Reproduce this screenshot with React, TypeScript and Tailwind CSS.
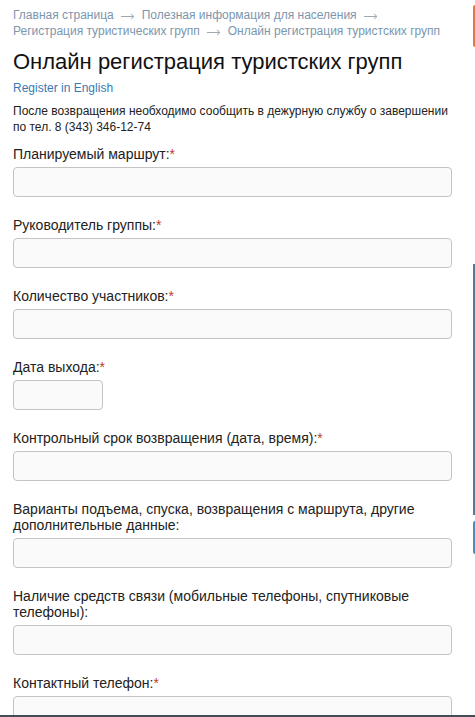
// Онлайн регистрация туристских групп — мобильная форма

const fields: { label: string; required?: boolean; narrow?: boolean }[] = [
  { label: 'Планируемый маршрут:', required: true },
  { label: 'Руководитель группы:', required: true },
  { label: 'Количество участников:', required: true },
  { label: 'Дата выхода:', required: true, narrow: true },
  { label: 'Контрольный срок возвращения (дата, время):', required: true },
  { label: 'Варианты подъема, спуска, возвращения с маршрута, другие дополнительные данные:' },
  { label: 'Наличие средств связи (мобильные телефоны, спутниковые телефоны):' },
  { label: 'Контактный телефон:', required: true },
];

// Длинная тонкая стрелка между пунктами крошек
function Arrow() {
  return (
    <svg
      className="mx-[7px] inline-block align-middle"
      width="14"
      height="8"
      viewBox="0 0 14 8"
      aria-hidden
    >
      <path d="M0 4.5H13M10 2L13 4.5L10 7" fill="none" stroke="#a0a8b0" strokeWidth="1" />
    </svg>
  );
}

export default function App() {
  return (
    <div className="relative h-[717px] overflow-hidden bg-white font-['Liberation_Sans',Arial,sans-serif] text-[#222]">
      {/* ── Боковые вкладки ── */}
      <div className="absolute right-0 top-[5px] h-[42px] w-[2px] rounded-l-sm bg-[#e07a45]" />
      <div className="absolute right-0 top-[264px] h-[251px] w-[2px] bg-[#5a7890]" />
      <div className="absolute right-0 top-[521px] h-[33px] w-[2px] rounded-l-sm bg-[#4a8ec0]" />
      <div className="absolute bottom-0 left-0 h-[2px] w-full bg-[#444c55]" />

      <div className="px-[13px] pt-[7px]">
        {/* ── Хлебные крошки ── */}
        <nav className="pr-[10px] text-[12px] leading-[16px] text-[#7b96ad]">
          Главная страница
          <Arrow />
          Полезная информация для населения
          <Arrow />
          Регистрация туристических групп
          <Arrow />
          Онлайн регистрация туристских групп
        </nav>

        <h1 className="mt-[10px] text-[22px] leading-[26px] text-[#111]">
          Онлайн регистрация туристских групп
        </h1>

        <a className="mt-[5px] block text-[12px] leading-[16px] text-[#3a7ab3]">Register in English</a>

        <p className="mt-[7px] pr-[8px] text-[12px] leading-[16px] text-[#222]">
          После возвращения необходимо сообщить в дежурную службу о завершении по тел. 8 (343) 346-12-74
        </p>

        {/* ── Форма ── */}
        <form className="mt-[11px] flex flex-col gap-[20px] pr-[10px]">
          {fields.map((f) => (
            <div key={f.label} className="flex flex-col gap-[5px]">
              <label className="text-[14px] leading-[16px] text-[#222]">
                {f.label}
                {f.required && <span className="text-[#c0392b]">*</span>}
              </label>
              <input
                type="text"
                className={`h-[30px] rounded-[4px] border border-[#c4c4c4] bg-[#fafafa] ${f.narrow ? 'w-[90px]' : 'w-full'}`}
              />
            </div>
          ))}
        </form>
      </div>
    </div>
  );
}
